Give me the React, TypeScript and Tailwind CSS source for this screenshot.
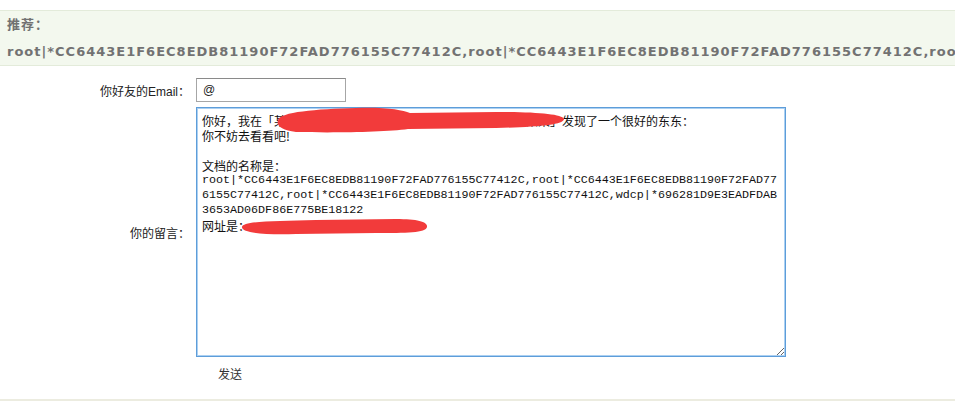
const hash = "CC6443E1F6EC8EDB81190F72FAD776155C77412C";

const cjk = "font-['Noto_Sans_CJK_SC',sans-serif] text-[12px]";
const mono = "font-['Liberation_Mono',monospace] text-[11.7px]";

function Redactions() {
  return (
    <svg
      className="pointer-events-none absolute left-0 top-0 z-10"
      width="590"
      height="250"
      viewBox="0 0 590 250"
      fill="#f23b3b"
    >
      <path d="M82 13 C84 5 120 2 160 1 C190 0 206 3 214 6 L300 5 C340 5 366 7 368 12 C368 18 340 20 300 21 L212 22 C190 25 140 26 100 25 C86 23 80 19 82 13 Z" />
      <path d="M46 120 C47 114 80 114 120 113 L200 112 C222 112 232 115 231 120 C230 126 210 126 180 126 L100 127 C70 128 45 126 46 120 Z" />
    </svg>
  );
}

function MessageBox() {
  return (
    <div className="relative ml-[6px]">
      <div className="h-[250px] w-[590px] resize overflow-hidden whitespace-pre border border-[#5e9dd9] shadow-[inset_0_0_0_1px_#abd0f2] pl-[5px] pt-[5px] leading-[15px] text-[#111]">
        <div className={cjk}>你好，我在「某某某某网站的文档共享频道某某某某某某某某某某」发现了一个很好的东东：</div>
        <div className={cjk}>你不妨去看看吧!</div>
        <div className="h-[15px]" />
        <div className={cjk}>文档的名称是：</div>
        <div className={mono}>root|*{hash},root|*CC6443E1F6EC8EDB81190F72FAD77</div>
        <div className={mono}>6155C77412C,root|*{hash},wdcp|*696281D9E3EADFDAB</div>
        <div className={mono}>3653AD06DF86E775BE18122</div>
        <div>
          <span className={cjk}>网址是：</span>
          <span className={mono}>http://www.xxxxxxx.com/?</span>
        </div>
      </div>
      <Redactions />
    </div>
  );
}

export default function App() {
  return (
    <div className="w-[955px] h-[401px] overflow-hidden bg-white font-['Liberation_Sans','Noto_Sans_CJK_SC',sans-serif] text-[12px] text-[#222]">
      <div className="pt-[10px]">
        <div className="border-y border-[#e3ebda] bg-[#f3f8ee] px-[7px] whitespace-nowrap overflow-hidden font-['DejaVu_Sans','Noto_Sans_CJK_SC',sans-serif] font-bold text-[13px] tracking-[1px] text-[#727272]">
          <div className="leading-[27px]">推荐：</div>
          <div className="leading-[27px]">
            root|*{hash},root|*{hash},roo
          </div>
        </div>
      </div>

      <div className="mt-[12px] flex items-center">
        <label className="w-[190px] pt-[3px] text-right">你好友的Email：</label>
        <input
          readOnly
          value="@"
          className="ml-[6px] h-[24px] w-[150px] border border-[#a6a6a6] border-t-[#8a8a8a] px-[6px] text-[12px] outline-none"
        />
      </div>

      <div className="mt-[5px] flex items-center">
        <label className="w-[190px] pt-[3px] text-right">你的留言：</label>
        <MessageBox />
      </div>

      <div className="h-[42px] pl-[218px] pt-[8px]">
        <button className="leading-[20px] text-[12px] text-[#333]">发送</button>
      </div>

      <div className="border-t-2 border-[#ecece0]" />
    </div>
  );
}
